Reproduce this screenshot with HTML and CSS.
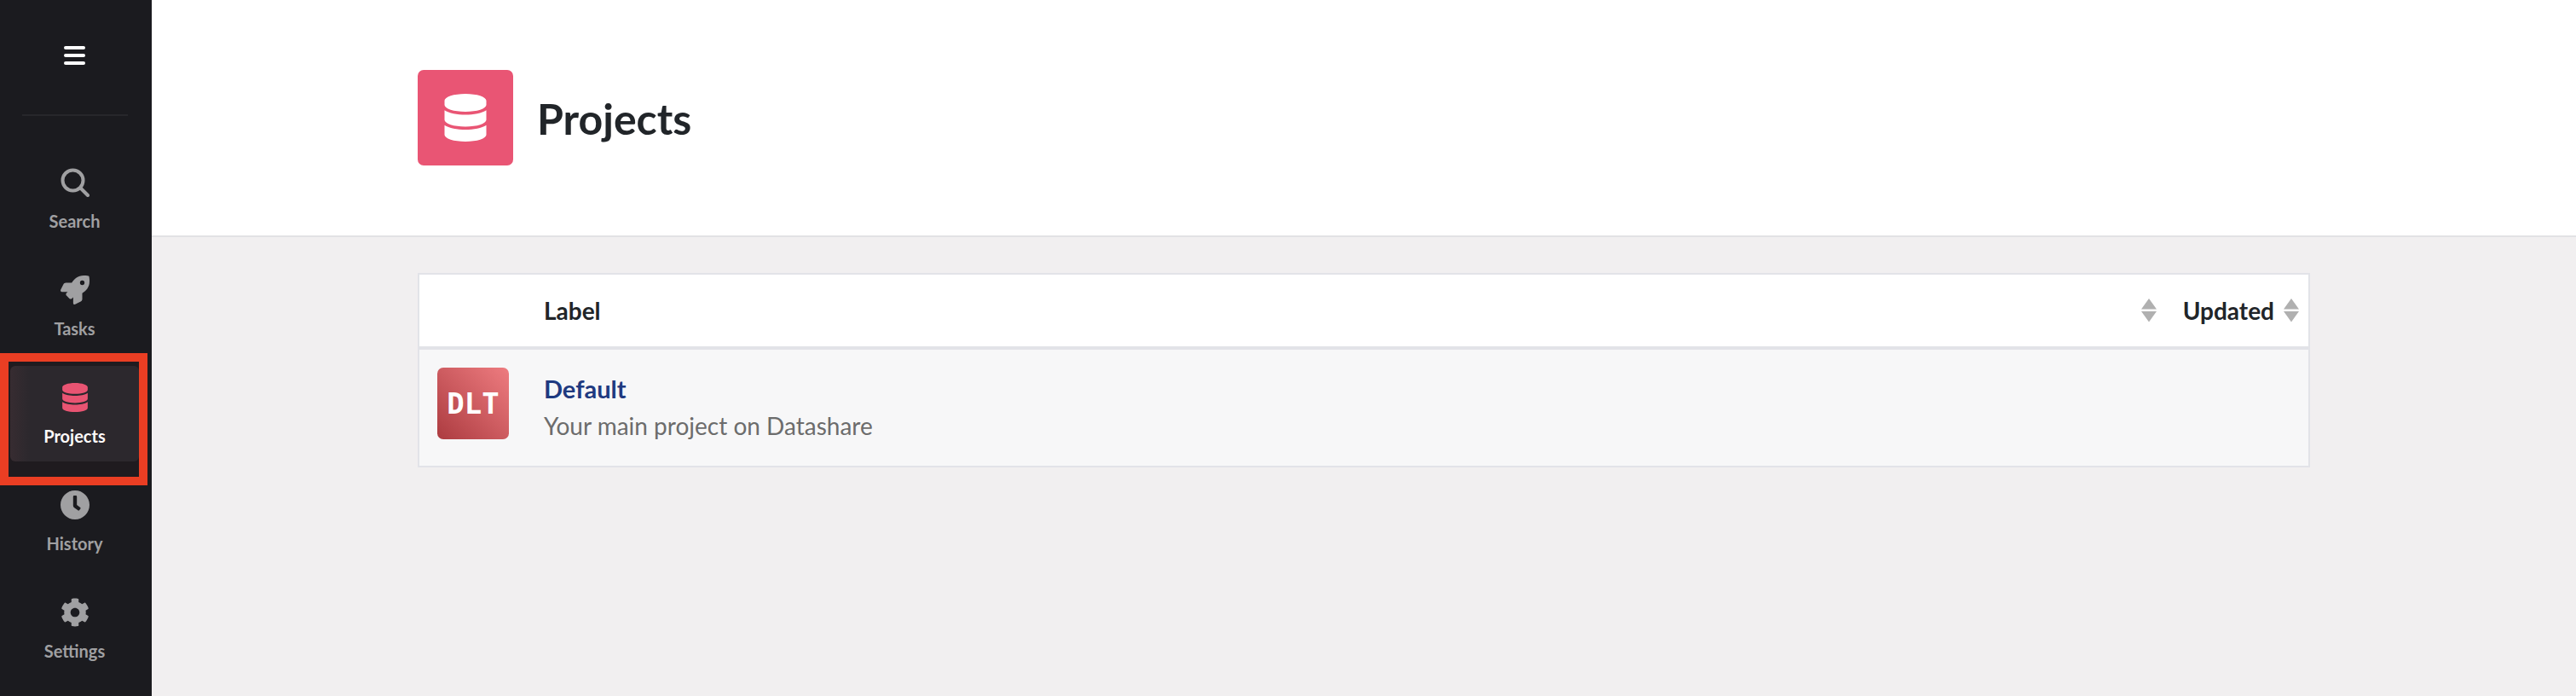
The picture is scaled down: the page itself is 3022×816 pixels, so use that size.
FILE: index.html
```html
<!DOCTYPE html>
<html lang="en">
<head>
<meta charset="UTF-8">
<title>Projects</title>
<link rel="stylesheet" href="styles.css">
</head>
<body>
<div class="app">
    <aside class="sidebar">
        <div class="burger"><span></span><span></span><span></span></div>
        <div class="divider"></div>
        <nav class="menu">
            <a class="menu-item">
                <svg class="menu-icon" viewBox="0 0 34 34"><circle cx="14.5" cy="14.5" r="12" fill="none" stroke="currentColor" stroke-width="4"/><path d="M23.5 23.5L32 32" fill="none" stroke="currentColor" stroke-width="4" stroke-linecap="round"/></svg>
                <span>Search</span>
            </a>
            <a class="menu-item">
                <svg class="menu-icon" viewBox="0 0 512 512"><path fill="currentColor" d="M505.12019,19.09375c-1.18066-5.53613-6.65819-11-12.207-12.1875C460.716,0,435.507,0,410.40747,0,307.17523,0,245.26909,55.20312,199.05238,128H94.83772c-16.34763.01562-35.55658,11.875-42.88664,26.48438L2.51562,253.29688A28.4,28.4,0,0,0,0,264a24.00867,24.00867,0,0,0,24.00582,24H127.81618l-22.47457,22.46875c-11.36521,11.36133-12.99607,32.25781,0,45.25L156.24582,406.625c11.15623,11.1875,32.15619,13.15625,45.27726,0l22.47457-22.46875V488a24.00867,24.00867,0,0,0,24.00581,24,28.55934,28.55934,0,0,0,10.707-2.51562l98.72834-49.39063c14.62888-7.29687,26.50776-26.5,26.50776-42.85937V312.79688c72.59753-46.3125,128.03493-108.40626,128.03493-211.09376C512.07526,76.5,512.07526,51.29688,505.12019,19.09375ZM384.04033,168A40,40,0,1,1,424.05,128,40.02322,40.02322,0,0,1,384.04033,168Z"/></svg>
                <span>Tasks</span>
            </a>
            <a class="menu-item active">
                <svg class="menu-icon" viewBox="0 0 448 512"><path fill="currentColor" d="M448 73.143v45.714C448 159.143 347.667 192 224 192S0 159.143 0 118.857V73.143C0 32.857 100.333 0 224 0s224 32.857 224 73.143zM448 176v102.857C448 319.143 347.667 352 224 352S0 319.143 0 278.857V176c48.125 33.143 136.208 48.572 224 48.572S399.874 209.143 448 176zm0 160v102.857C448 479.143 347.667 512 224 512S0 479.143 0 438.857V336c48.125 33.143 136.208 48.572 224 48.572S399.874 369.143 448 336z"/></svg>
                <span>Projects</span>
            </a>
            <a class="menu-item">
                <svg class="menu-icon" viewBox="8 8 496 496"><path fill="currentColor" d="M256,8C119,8,8,119,8,256S119,504,256,504,504,393,504,256,393,8,256,8Zm92.49,313h0l-20,25a16,16,0,0,1-22.49,2.5h0l-67-49.72a40,40,0,0,1-15-31.23V112a16,16,0,0,1,16-16h32a16,16,0,0,1,16,16V256l58,42.5A16,16,0,0,1,348.49,321Z"/></svg>
                <span>History</span>
            </a>
            <a class="menu-item">
                <svg class="menu-icon" viewBox="0 0 512 512"><path fill="currentColor" d="M487.4 315.7l-42.6-24.6c4.3-23.2 4.3-47 0-70.2l42.6-24.6c4.9-2.8 7.1-8.6 5.5-14-11.1-35.6-30-67.8-54.7-94.6-3.8-4.1-10-5.1-14.8-2.3L380.8 110c-17.9-15.4-38.5-27.3-60.8-35.1V25.8c0-5.6-3.9-10.5-9.4-11.7-36.7-8.2-74.3-7.8-109.2 0-5.5 1.2-9.4 6.1-9.4 11.7V75c-22.2 7.9-42.8 19.8-60.8 35.1L88.7 85.5c-4.9-2.8-11-1.9-14.8 2.3-24.7 26.7-43.6 58.9-54.7 94.6-1.7 5.4.6 11.2 5.5 14L67.3 221c-4.3 23.2-4.3 47 0 70.2l-42.6 24.6c-4.9 2.8-7.1 8.6-5.5 14 11.1 35.6 30 67.8 54.7 94.6 3.8 4.1 10 5.1 14.8 2.3l42.6-24.6c17.9 15.4 38.5 27.3 60.8 35.1v49.2c0 5.6 3.9 10.5 9.4 11.7 36.7 8.2 74.3 7.8 109.2 0 5.5-1.2 9.4-6.1 9.4-11.7v-49.2c22.2-7.9 42.8-19.8 60.8-35.1l42.6 24.6c4.9 2.8 11 1.9 14.8-2.3 24.7-26.7 43.6-58.9 54.7-94.6 1.5-5.5-.7-11.3-5.6-14.1zM256 336c-44.1 0-80-35.9-80-80s35.9-80 80-80 80 35.9 80 80-35.9 80-80 80z"/></svg>
                <span>Settings</span>
            </a>
        </nav>
        <div class="highlight"></div>
    </aside>

    <main class="main">
        <header class="page-header">
            <div class="page-icon">
                <svg viewBox="0 0 448 512"><path fill="currentColor" d="M448 73.143v45.714C448 159.143 347.667 192 224 192S0 159.143 0 118.857V73.143C0 32.857 100.333 0 224 0s224 32.857 224 73.143zM448 176v102.857C448 319.143 347.667 352 224 352S0 319.143 0 278.857V176c48.125 33.143 136.208 48.572 224 48.572S399.874 209.143 448 176zm0 160v102.857C448 479.143 347.667 512 224 512S0 479.143 0 438.857V336c48.125 33.143 136.208 48.572 224 48.572S399.874 369.143 448 336z"/></svg>
            </div>
            <h1>Projects</h1>
        </header>

        <section class="content">
            <div class="table">
                <div class="table-head">
                    <div class="col-label">Label</div>
                    <svg class="sort" viewBox="0 0 18 28"><path d="M9 0L18 12.5H0Z M0 15H18L9 27.5Z"/></svg>
                    <div class="col-updated">Updated</div>
                    <svg class="sort" viewBox="0 0 18 28"><path d="M9 0L18 12.5H0Z M0 15H18L9 27.5Z"/></svg>
                </div>
                <div class="table-row">
                    <div class="avatar">DLT</div>
                    <div class="project">
                        <a class="project-name">Default</a>
                        <p>Your main project on Datashare</p>
                    </div>
                </div>
            </div>
        </section>
    </main>
</div>
</body>
</html>
```

FILE: styles.css
```css
* {
    box-sizing: border-box;
}

body {
    margin: 0;
    font-family: Lato, "Open Sans", sans-serif;
    background-color: #f1eff0;
    color: #212529;
}

.app {
    display: flex;
    height: 816px;
    overflow: hidden;
}

/* sidebar */
.sidebar {
    position: relative;
    flex: 0 0 178px;
    background-color: #1b1b1f;
    color: #a0a0a2;
}

.burger {
    height: 134px;
    padding: 54px 3px 0 0;
    display: flex;
    flex-direction: column;
    align-items: center;
    gap: 5px;
}

.burger span {
    display: block;
    width: 25px;
    height: 4px;
    border-radius: 2px;
    background-color: #fff;
}

.divider {
    width: 124px;
    height: 2px;
    margin-left: 26px;
    background-color: #27272b;
}

.menu {
    display: flex;
    flex-direction: column;
    gap: 14px;
    padding: 41px 15px 0 12px;
}

.menu-item {
    height: 112px;
    padding-top: 20px;
    display: flex;
    flex-direction: column;
    align-items: center;
    border-radius: 6px;
    font-size: 20px;
    font-weight: 700;
    line-height: 24px;
}

.menu-item span {
    margin-top: 16px;
}

.menu-icon {
    width: 34px;
    height: 34px;
}

.menu-item.active {
    background: linear-gradient(90deg, #332c31 0, #28282d 22px);
    color: #fff;
}

.menu-item.active .menu-icon {
    color: #e95574;
}

/* red box drawn over the active entry */
.highlight {
    position: absolute;
    left: 0;
    top: 414px;
    width: 173px;
    height: 155px;
    border: 10px solid #ea3e23;
    background-color: rgba(234, 62, 35, 0.02);
}

/* page */
.main {
    flex: 1;
    min-width: 0;
}

.page-header {
    height: 278px;
    padding: 82px 312px 0;
    display: flex;
    align-items: flex-start;
    gap: 28px;
    background-color: #fff;
    border-bottom: 2px solid #e2e2e5;
}

.page-icon {
    flex: 0 0 112px;
    height: 112px;
    display: flex;
    align-items: center;
    justify-content: center;
    border-radius: 7px;
    background-color: #e95574;
    color: #fff;
}

.page-icon svg {
    width: 50px;
    height: 56px;
}

h1 {
    margin: 0;
    height: 112px;
    font-size: 50px;
    font-weight: 700;
    line-height: 114px;
}

.content {
    padding: 42px 312px 0;
}

.table {
    border: 2px solid #e2e3e8;
    background-color: #f7f7f8;
}

.table-head {
    height: 88px;
    padding: 0 11px 0 146px;
    display: flex;
    align-items: center;
    background-color: #fff;
    border-bottom: 4px solid #e2e3e8;
    font-size: 28px;
    font-weight: 700;
}

.col-label {
    flex: 1;
}

.col-updated {
    margin: 0 11px 0 31px;
}

.sort {
    width: 18px;
    height: 28px;
    fill: #b0b0b0;
}

.table-row {
    height: 136px;
    padding: 21px 0 0 21px;
    display: flex;
    gap: 41px;
}

.avatar {
    flex: 0 0 84px;
    height: 84px;
    display: flex;
    align-items: center;
    justify-content: center;
    border-radius: 7px;
    background: linear-gradient(45deg, #ac3b40, #ee7c80);
    color: #fff;
    font-family: "DejaVu Sans Mono", monospace;
    font-size: 34px;
    font-weight: 700;
}

.project-name {
    display: block;
    margin-top: 6px;
    font-size: 29px;
    font-weight: 700;
    line-height: 38px;
    color: #1f3a80;
}

.project p {
    margin: 4px 0 0;
    font-size: 28px;
    line-height: 40px;
    color: #6c6c6c;
}
```
